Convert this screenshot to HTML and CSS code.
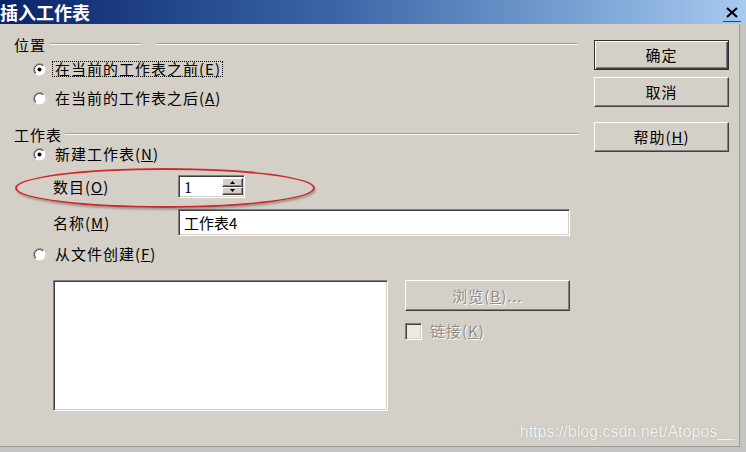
FILE: index.html
```html
<!DOCTYPE html>
<html lang="zh">
<head>
<meta charset="utf-8">
<title>插入工作表</title>
<link rel="stylesheet" href="styles.css">
</head>
<body>
<div class="window">
  <div class="titlebar">
    <span class="title">插入工作表</span>
    <span class="close"><svg width="12" height="11" viewBox="0 0 12 11"><path d="M1 1 L11 10 M11 1 L1 10" stroke="#000" stroke-width="2.2" fill="none"/></svg></span>
  </div>
  <div class="dialog">
    <div class="main">
      <div class="group-head">
        <span class="group-label">位置</span>
        <span class="rule short"></span>
        <span class="rule gap"></span>
      </div>
      <div class="radio-row r1">
        <svg class="radio" width="13" height="13" viewBox="0 0 13 13"><circle cx="6.5" cy="6.5" r="6" fill="#fff"/><path d="M2.26 10.74 A6 6 0 0 1 10.74 2.26" fill="none" stroke="#808080"/><path d="M2.96 10.04 A5 5 0 0 1 10.04 2.96" fill="none" stroke="#404040"/><circle cx="6.5" cy="6.5" r="2" fill="#000"/></svg>
        <span class="opt focus">在当前的工作表之前(E)</span>
      </div>
      <div class="radio-row r2">
        <svg class="radio" width="13" height="13" viewBox="0 0 13 13"><circle cx="6.5" cy="6.5" r="6" fill="#fff"/><path d="M2.26 10.74 A6 6 0 0 1 10.74 2.26" fill="none" stroke="#808080"/><path d="M2.96 10.04 A5 5 0 0 1 10.04 2.96" fill="none" stroke="#404040"/></svg>
        <span class="opt">在当前的工作表之后(<u>A</u>)</span>
      </div>
      <div class="group-head g2">
        <span class="group-label">工作表</span>
        <span class="rule"></span>
      </div>
      <div class="radio-row r3">
        <svg class="radio" width="13" height="13" viewBox="0 0 13 13"><circle cx="6.5" cy="6.5" r="6" fill="#fff"/><path d="M2.26 10.74 A6 6 0 0 1 10.74 2.26" fill="none" stroke="#808080"/><path d="M2.96 10.04 A5 5 0 0 1 10.04 2.96" fill="none" stroke="#404040"/><circle cx="6.5" cy="6.5" r="2" fill="#000"/></svg>
        <span class="opt">新建工作表(<u>N</u>)</span>
      </div>
      <div class="field-row count-row">
        <span class="field-label">数目(<u>O</u>)</span>
        <div class="spin sunken">
          <span class="spin-value">1</span>
          <div class="spin-btns">
            <span class="spin-btn"><svg width="5" height="3" viewBox="0 0 5 3"><path d="M2.5 0 L5 3 L0 3 Z" fill="#000"/></svg></span>
            <span class="spin-btn"><svg width="5" height="3" viewBox="0 0 5 3"><path d="M0 0 L5 0 L2.5 3 Z" fill="#000"/></svg></span>
          </div>
        </div>
      </div>
      <div class="field-row name-row">
        <span class="field-label">名称(<u>M</u>)</span>
        <div class="textbox sunken">工作表4</div>
      </div>
      <div class="radio-row r4">
        <svg class="radio" width="13" height="13" viewBox="0 0 13 13"><circle cx="6.5" cy="6.5" r="6" fill="#fff"/><path d="M2.26 10.74 A6 6 0 0 1 10.74 2.26" fill="none" stroke="#808080"/><path d="M2.96 10.04 A5 5 0 0 1 10.04 2.96" fill="none" stroke="#404040"/></svg>
        <span class="opt">从文件创建(<u>F</u>)</span>
      </div>
      <div class="file-row">
        <div class="listbox sunken"></div>
        <div class="file-side">
          <div class="btn browse disabled">浏览(<u>B</u>)...</div>
          <div class="check-row">
            <span class="checkbox sunken"></span>
            <span class="check-label disabled">链接(<u>K</u>)</span>
          </div>
        </div>
      </div>
    </div>
    <div class="buttons">
      <div class="btn default">确定</div>
      <div class="btn cancel">取消</div>
      <div class="btn help">帮助(<u>H</u>)</div>
    </div>
    <div class="annot"></div>
    <div class="watermark">https://blog.csdn.net/Atopos__</div>
  </div>
</div>
</body>
</html>
```

FILE: styles.css
```css
html, body {
  margin: 0;
  padding: 0;
}
body {
  width: 746px;
  height: 452px;
  overflow: hidden;
  background: #c4c4c2;
  font-family: "Noto Sans CJK SC", "Liberation Sans", sans-serif;
  color: #000;
}
.window {
  width: 746px;
}
.titlebar {
  height: 24px;
  background: linear-gradient(to right, #0a246a 0%, #3a66a8 45%, #a6caf0 100%);
  display: flex;
  align-items: center;
  justify-content: space-between;
  overflow: hidden;
}
.title {
  color: #fff;
  font-weight: bold;
  font-size: 18px;
  line-height: 24px;
  margin-left: 0;
}
.close {
  width: 18px;
  height: 17px;
  margin-right: 5px;
  margin-top: 2px;
  box-sizing: border-box;
  border-bottom: 1px solid #404040;
  display: flex;
  align-items: center;
  justify-content: center;
}
.dialog {
  position: relative;
  width: 739px;
  height: 422px;
  background: #d4d0c8;
  border-right: 1px solid #9c9a96;
  border-bottom: 1px solid #9c9a96;
  display: flex;
  font-size: 15px;
  line-height: 20px;
}
.main {
  width: 580px;
  box-sizing: border-box;
  padding-top: 11px;
  padding-right: 2px;
}
.group-head {
  display: flex;
  align-items: center;
  height: 20px;
  padding-left: 14px;
}
.group-head.g2 {
  height: 18px;
  margin-top: 18px;
}
.group-label {
  letter-spacing: 1px;
}
.rule {
  flex: 1;
  height: 0;
  border-top: 1px solid #a09d97;
  border-bottom: 1px solid #fff;
  margin-left: 3px;
  margin-top: -3px;
}
.rule.short {
  flex: 0 0 91px;
  margin-left: 4px;
}
.rule.gap {
  margin-left: 15px;
}
.radio-row {
  display: flex;
  align-items: center;
  height: 20px;
  padding-left: 33px;
}
.radio {
  flex: none;
  margin-right: 6px;
}
.opt {
  letter-spacing: 1px;
  padding: 0 1px 0 2px;
  border: 1px solid transparent;
  line-height: 14px;
}
.opt.focus {
  border: 1px dotted #000;
}
.r1 { margin-top: 4px; }
.r2 { margin-top: 9px; }
.r4 { margin-top: 8px; }
.sunken {
  box-sizing: border-box;
  border: 1px solid;
  border-color: #808080 #fff #fff #808080;
  box-shadow: inset 1px 1px #404040, inset -1px -1px #d4d0c8;
  background: #fff;
}
.field-row {
  display: flex;
  align-items: center;
  padding-left: 53px;
}
.field-label {
  width: 125px;
  letter-spacing: 1px;
}
.count-row {
  height: 23px;
  margin-top: 11px;
}
.name-row {
  height: 27px;
  margin-top: 11px;
}
.spin {
  width: 67px;
  height: 23px;
  display: flex;
  align-items: stretch;
  padding: 2px 1px 2px 2px;
}
.spin-value {
  flex: 1;
  padding-left: 3px;
  font-family: "Liberation Serif", serif;
  font-size: 16px;
  line-height: 19px;
}
.spin-btns {
  width: 21px;
  display: flex;
  flex-direction: column;
}
.spin-btn {
  flex: 1;
  box-sizing: border-box;
  border: 1px solid;
  border-color: #fff #404040 #404040 #fff;
  box-shadow: inset -1px -1px #808080;
  background: #d4d0c8;
  display: flex;
  align-items: center;
  justify-content: center;
}
.textbox {
  width: 392px;
  height: 27px;
  padding-left: 5px;
  line-height: 25px;
}
.file-row {
  display: flex;
  align-items: flex-start;
  padding-left: 53px;
  margin-top: 16px;
}
.listbox {
  width: 335px;
  height: 131px;
}
.file-side {
  margin-left: 17px;
}
.btn {
  box-sizing: border-box;
  width: 135px;
  height: 30px;
  border: 1px solid;
  border-color: #fff #404040 #404040 #fff;
  box-shadow: inset -1px -1px #808080;
  background: #d4d0c8;
  display: flex;
  align-items: center;
  justify-content: center;
  letter-spacing: 1px;
}
.btn.browse {
  width: 165px;
  height: 31px;
}
.disabled {
  color: #8e8c88;
  text-shadow: 1px 1px 0 #fff;
}
.check-row {
  display: flex;
  align-items: center;
  margin-top: 10px;
}
.checkbox {
  width: 17px;
  height: 17px;
  background: #ebe9e4;
  margin-right: 8px;
}
.check-label {
  letter-spacing: 1px;
}
.buttons {
  margin-left: 14px;
  padding-top: 16px;
}
.btn.default {
  border-color: #303030;
  box-shadow: inset 1px 1px #fff, inset -1px -1px #404040, inset -2px -2px #808080;
}
.btn.cancel {
  margin-top: 7px;
}
.btn.help {
  margin-top: 15px;
}
.annot {
  position: absolute;
  left: 15px;
  top: 144px;
  width: 300px;
  height: 40px;
  box-sizing: border-box;
  border: 2px solid #d0282a;
  border-radius: 50%;
  box-shadow: 1px 2px 2px rgba(0, 0, 0, 0.25);
}
.watermark {
  position: absolute;
  right: 4px;
  top: 398px;
  font-family: "Liberation Sans", sans-serif;
  font-size: 16px;
  line-height: 20px;
  color: rgba(255, 255, 255, 0.9);
  text-shadow: 0 0 1px rgba(110, 110, 110, 0.6);
}
```
